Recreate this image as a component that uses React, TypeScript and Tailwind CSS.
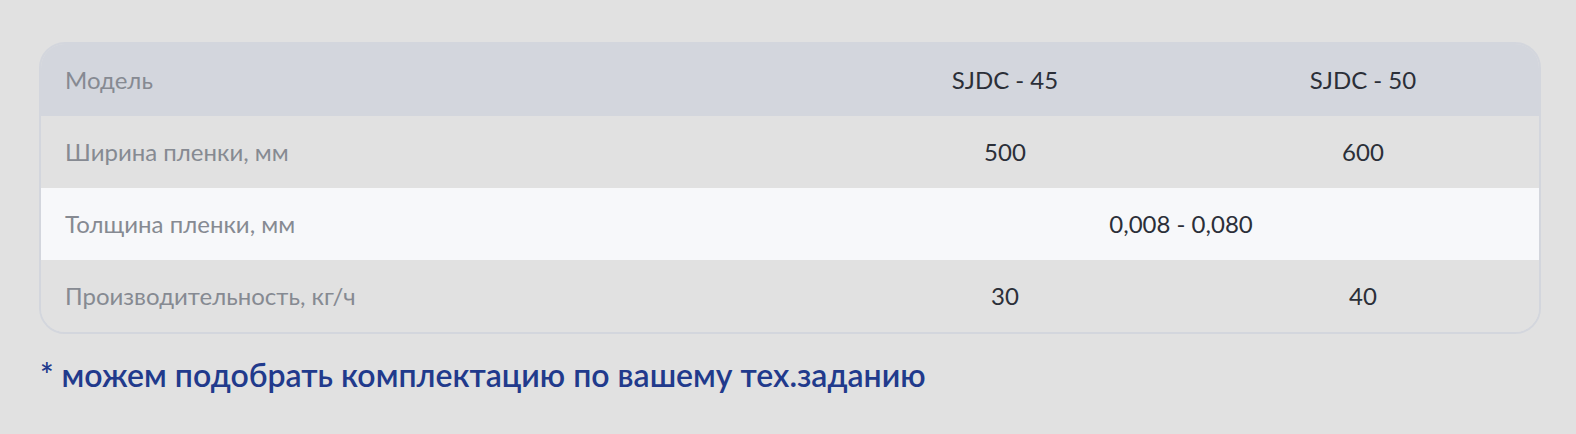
import * as React from "react";

type Row = {
	label: string;
	values: string[];
	bg: string;
};

const rows: Row[] = [
	{ label: "Ширина пленки, мм", values: ["500", "600"], bg: "bg-[#e1e1e1]" },
	{ label: "Толщина пленки, мм", values: ["0,008 - 0,080"], bg: "bg-[#f7f8fa]" },
	{ label: "Производительность, кг/ч", values: ["30", "40"], bg: "bg-[#e1e1e1]" },
];

export default function App(): React.ReactElement {
	return (
		<div className="w-[1576px] h-[434px] bg-[#e1e1e1] pt-[42px] pl-[39px] font-['Lato','Liberation_Sans',sans-serif]">
			<div className="w-[1502px] border-2 border-[#d3d6dd] rounded-[26px] overflow-hidden">
				<div className="grid grid-cols-[1fr_364px_352px] h-[72px] items-center bg-[#d3d6dd] text-[24px]">
					<div className="pl-6 text-[#868a92]">Модель</div>
					<div className="text-center text-[#2b2f38]">SJDC - 45</div>
					<div className="text-center text-[#2b2f38]">SJDC - 50</div>
				</div>
				{rows.map((row) => (
					<div
						key={row.label}
						className={`grid grid-cols-[1fr_364px_352px] h-[72px] items-center text-[24px] ${row.bg}`}
					>
						<div className="pl-6 text-[#868a92]">{row.label}</div>
						{row.values.length === 1 ? (
							<div className="col-span-2 text-center text-[#2b2f38]">{row.values[0]}</div>
						) : (
							row.values.map((value, index) => (
								<div key={index} className="text-center text-[#2b2f38]">
									{value}
								</div>
							))
						)}
					</div>
				))}
			</div>
			<p className="mt-[17px] ml-px text-[32px] font-semibold text-[#213a8c]">
				* можем подобрать комплектацию по вашему тех.заданию
			</p>
		</div>
	);
}
